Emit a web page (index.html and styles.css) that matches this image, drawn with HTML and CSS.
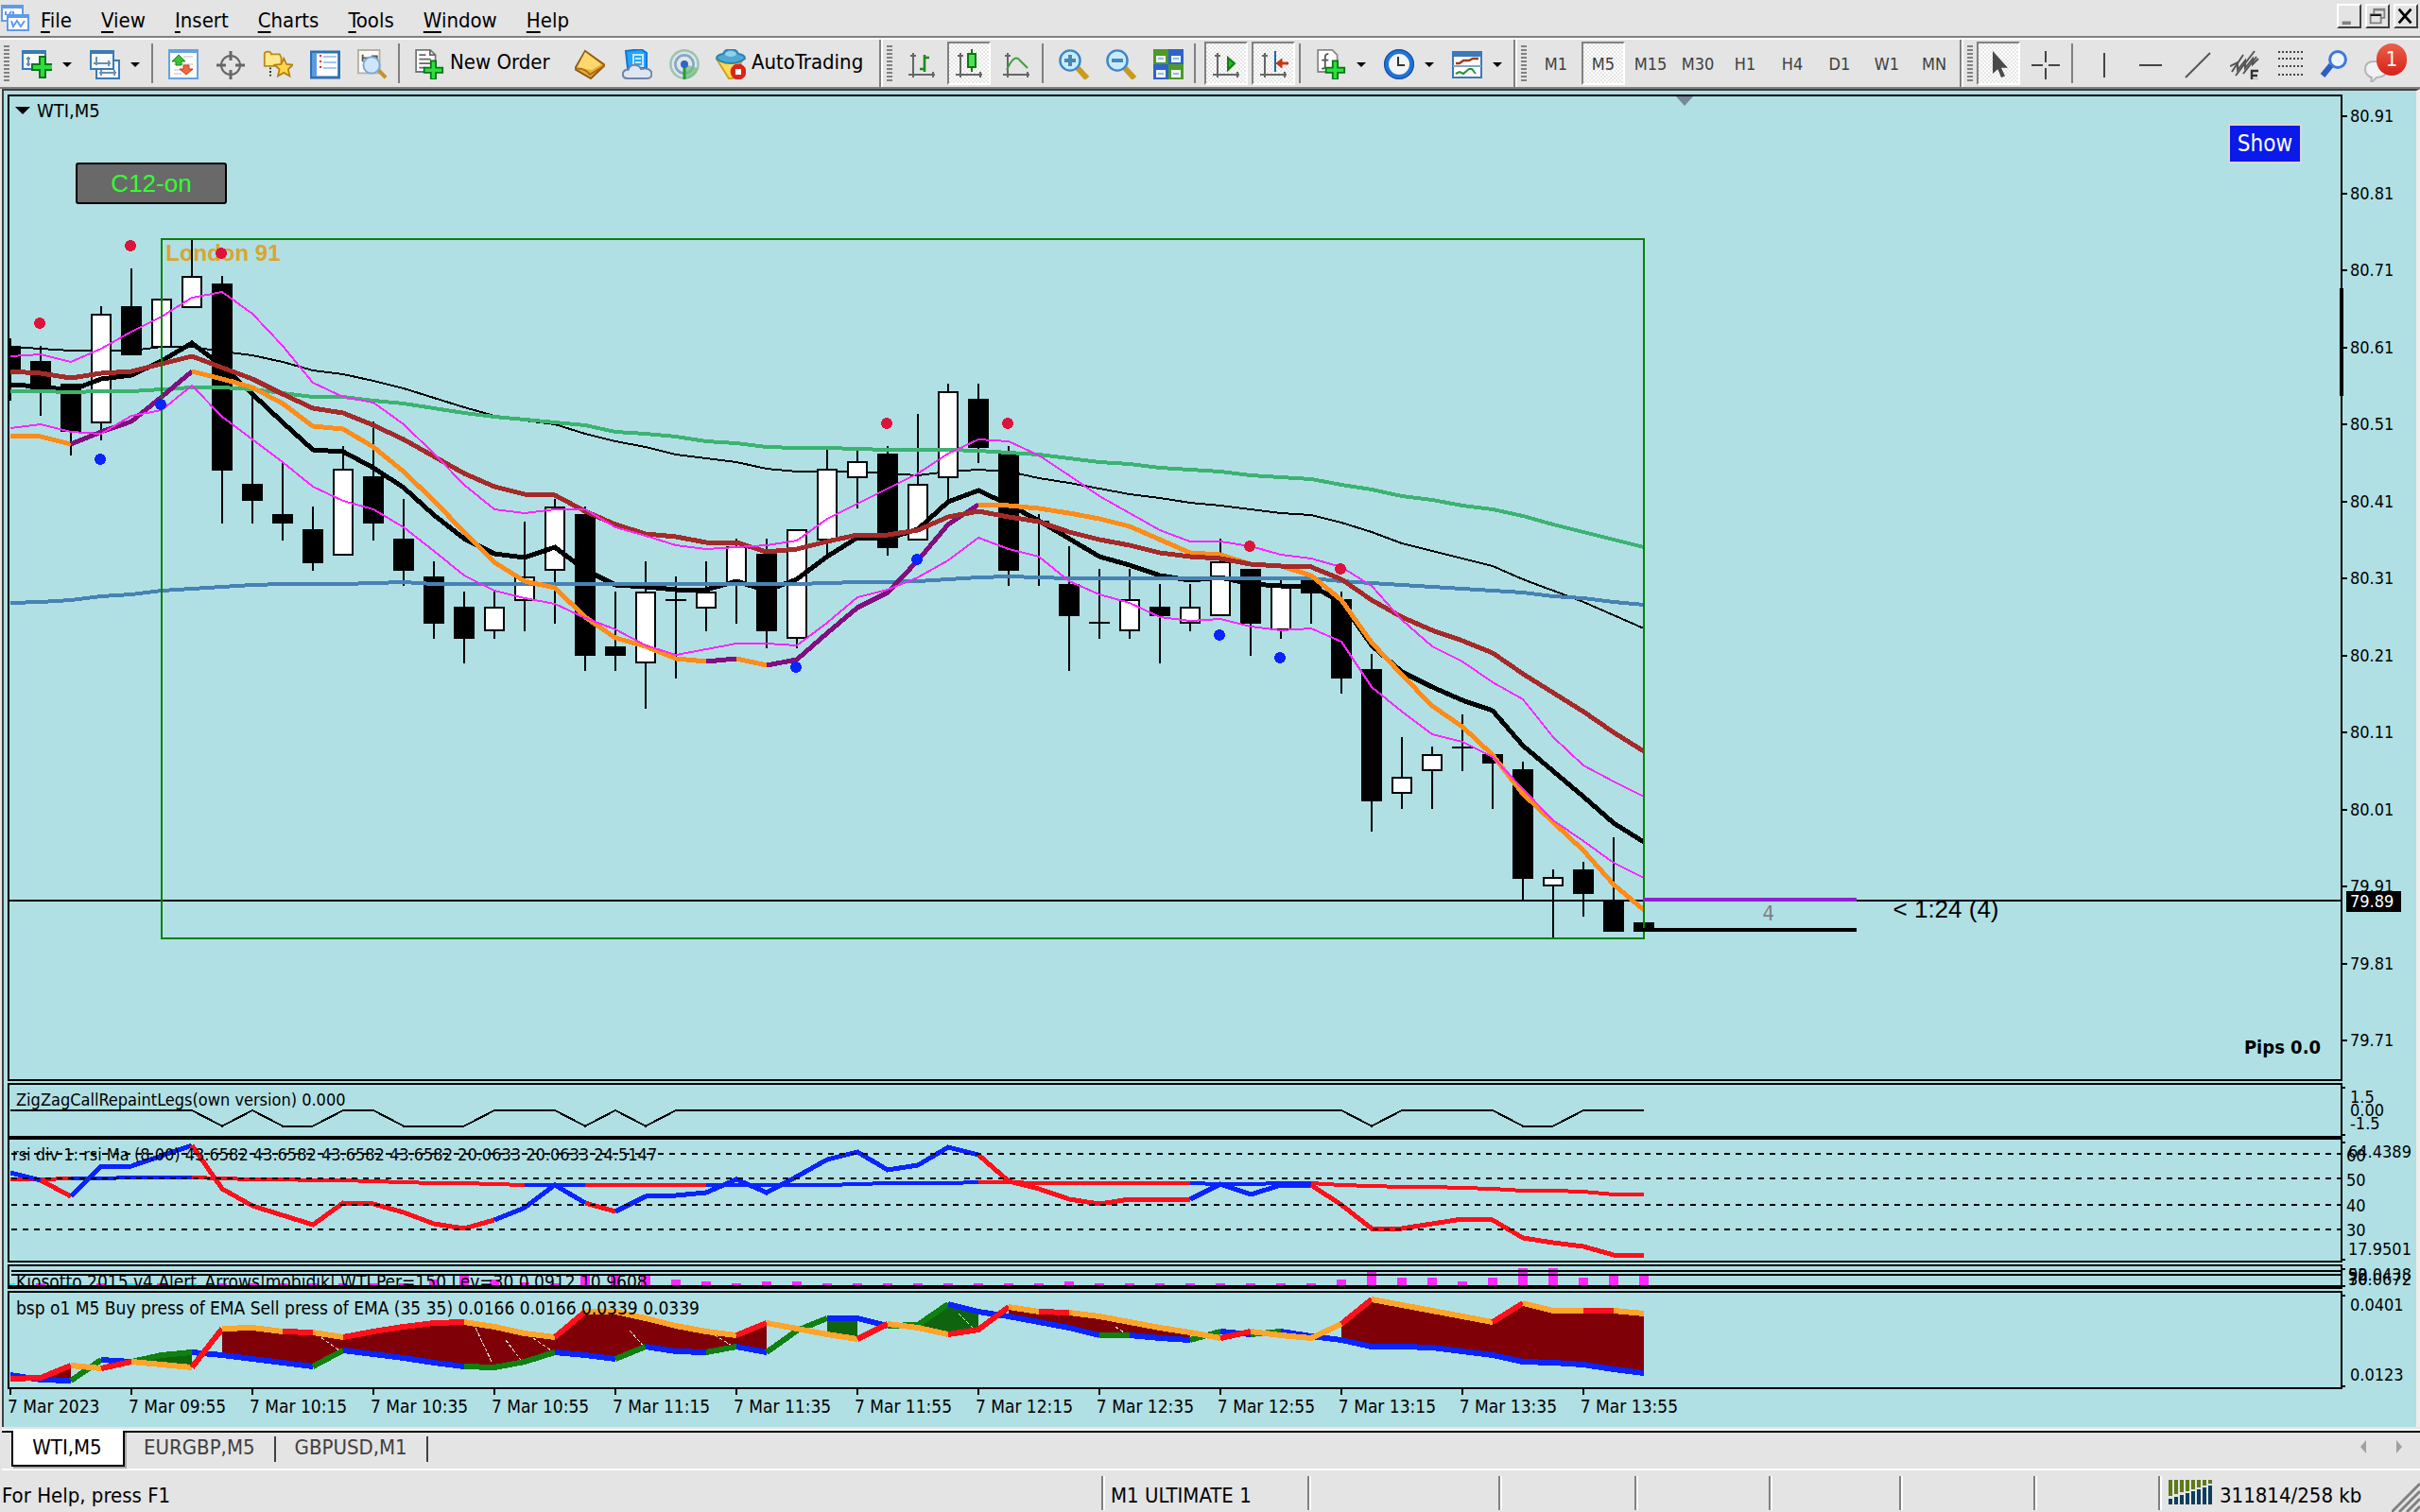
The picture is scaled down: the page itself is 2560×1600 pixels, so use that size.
FILE: index.html
```html
<!DOCTYPE html>
<html lang="en">
<head>
<meta charset="utf-8">
<title>WTI,M5</title>
<link rel="stylesheet" href="styles.css">
</head>
<body>
<header class="menubar">
  <svg class="app-icon" viewBox="0 0 16 16" aria-hidden="true"><path d="M1 2h11v8H1z" fill="#fff" stroke="#5f9bea"/><path d="M1 2.500h11" stroke="#5f9bea" stroke-width="2"/><path d="M3 7V5m1 3l2-3m1 2V5" stroke="#5f9bea" fill="none"/><path d="M4 7h11v8H4z" fill="#fff" stroke="#5f9bea"/><path d="M4 7.500h11" stroke="#5f9bea" stroke-width="2"/><path d="M6 10l1 3 2-3 2 3 2-3" stroke="#5f9bea" fill="none"/></svg>
  <nav class="menus">
    <button><u>F</u>ile</button><button><u>V</u>iew</button><button><u>I</u>nsert</button><button><u>C</u>harts</button><button><u>T</u>ools</button><button><u>W</u>indow</button><button><u>H</u>elp</button>
  </nav>
  <div class="window-buttons">
    <button aria-label="Minimize"><svg viewBox="0 0 12 12"><path d="M2 10h5" stroke="#808080" stroke-width="2"/></svg></button>
    <button aria-label="Restore"><svg viewBox="0 0 12 12"><path d="M4 5V2h6v5H8M4 2.500h6" fill="none" stroke="#808080"/><path d="M2 5h6v5H2z" fill="none" stroke="#808080"/><path d="M2 5.500h6" stroke="#111"/></svg></button>
    <button aria-label="Close"><svg viewBox="0 0 12 12"><path d="M2 2l7 8M9 2l-7 8" stroke="#000" stroke-width="1.500"/></svg></button>
  </div>
</header>

<div class="toolbars">
  <div class="toolbar standard">
    <i class="grip"></i>
    <button class="tool drop" aria-label="New chart"><svg viewBox="0 0 16 16"><path d="M.5 1h12v9.500H.5z" fill="#f4f9fd" stroke="#3a7ab8"/><path d="M0 1.500h13" stroke="#3a7ab8" stroke-width="2"/><path d="M3.500 4v5M2.500 5h2M2.500 8h2" stroke="#6b90b0"/><path d="M9.500 4h3v4h4v3h-4v4h-3v-4h-4V8h4z" fill="#2ddf3c" stroke="#08761a"/></svg></button>
    <button class="tool drop" aria-label="Profiles"><svg viewBox="0 0 16 16"><path d="M3.500 6h12v9.500h-12z" fill="#f4f9fd" stroke="#3a7ab8"/><path d="M5 12.500h9M6 11v3M13 11v3" stroke="#6b90b0"/><path d="M.5 1h12v9.500H.5z" fill="#f4f9fd" stroke="#3a7ab8"/><path d="M0 1.500h13" stroke="#3a7ab8" stroke-width="2"/><path d="M3.500 4v4.500M2 7.500h9M10 6v3" stroke="#6b90b0"/></svg></button>
    <i class="sep"></i>
    <button class="tool" aria-label="Market Watch"><svg viewBox="0 0 16 16"><path d="M.5.5h15v15H.5z" fill="#fff" stroke="#65a3de"/><path d="M.5 1h15" stroke="#65a3de" stroke-width="2"/><path d="M8 4h5M3 8h10M3 11h10M3 13h4" stroke="#ddd"/><path d="M5.500 3L9 6.500H7v2H4v-2H2z" fill="#3fc03c" stroke="#1a8a1a" stroke-width=".5"/><path d="M9.500 13.500L6 10.500h2v-2h3v2h2z" fill="#f0683a" stroke="#c93c12" stroke-width=".5"/></svg></button>
    <button class="tool" aria-label="Data Window"><svg viewBox="0 0 16 16"><circle cx="8" cy="8.500" r="5" fill="none" stroke="#666"/><path d="M8 1v5M8 11v5M.5 8.500h5M10.500 8.500h5" stroke="#666" stroke-width="1.500"/></svg></button>
    <button class="tool" aria-label="Navigator"><svg viewBox="-1 0 18 16"><path d="M0 2q0-1.500 2-1.500T4 2h5l1 2v5H0z" fill="#ffe98a" stroke="#b98a1c"/><path d="M3.500 10v5" stroke="#222" stroke-dasharray="1"/><path d="M11.500 4.500l1.600 3.500 3.800.4-2.800 2.600.9 4-3.500-2-3.500 2 .9-4L6.100 8.400 9.900 8z" fill="#ffd84a" stroke="#b58012"/></svg></button>
    <button class="tool" aria-label="Terminal"><svg viewBox="0 0 16 16"><path d="M.7 1.500h14.600v13.500H.7z" fill="#fff" stroke="#2f6fb5" stroke-width="1.400"/><path d="M1 2h2.500v12.500H1z" fill="#5c9be0"/><path d="M7 4h7M7 7h7M7 10h7" stroke="#a9c6f5"/><path d="M5 3.500h1M5 6.500h1M5 9.500h1" stroke="#e22"/></svg></button>
    <button class="tool" aria-label="Strategy Tester"><svg viewBox="0 0 17 17"><path d="M.5.5h12v13H.5z" fill="#fafafa" stroke="#b5b0a0"/><path d="M3 3v4M3 5h3M8 4h3v4" stroke="#555" fill="none"/><path d="M12 12l4 4" stroke="#c8902a" stroke-width="2.200"/><circle cx="8" cy="9" r="4.600" fill="#cfe6fa" stroke="#78a8d4"/></svg></button>
    <i class="sep"></i>
    <button class="tool labelled order"><svg viewBox="0 0 17 18"><path d="M.7.5h8.500l3 3v10H.7z" fill="#fff" stroke="#777"/><path d="M9 .5v3h3M2.500 3.500h4M2.500 6h7M2.500 8.500h7M2.500 11h4" stroke="#666" fill="none"/><path d="M9.500 7h3v4h4v3h-4v4h-3v-4h-4v-3h4z" fill="#2ddf3c" stroke="#08761a"/></svg><span>New Order</span></button>
    <button class="tool" aria-label="MetaEditor"><svg viewBox="0 0 16 16"><path d="M5.500 1L16 8.500 8.500 15.500 0 10.500z" fill="#e8ae3b" stroke="#8f5b10"/><path d="M5.500 1.500L14 8l-5 3-8-1z" fill="#ffd76b"/><path d="M0 10.500q5-1 8 3l8-5" fill="none" stroke="#a86c14"/></svg></button>
    <button class="tool" aria-label="Virtual hosting"><svg viewBox="0 0 16 16"><path d="M2 1l8-1 3 2v8H3z" fill="#25a5f8" stroke="#0b76d8"/><path d="M6 3h5v6H6zM7 5h3M7 7h3" stroke="#bfe9ff" fill="none"/><path d="M3 15.500q-3 0-2.500-3 .8-2 2.800-1.600 1-3 4-2.400 2 .2 2.700 2 4-1 5.500 1.500.8 3.500-2.500 3.500z" fill="#dfe6f3" stroke="#6f83aa"/></svg></button>
    <button class="tool" aria-label="Signals"><svg viewBox="0 0 16 16"><g fill="none" stroke-width="1.300"><circle cx="8" cy="8" r="7.300" stroke="#9dc4b5"/><circle cx="8" cy="8" r="4.800" stroke="#7fa9c9"/></g><path d="M8 8l7 2q-1 5-7 6z" fill="#6dbf78" opacity=".7"/><path d="M8 9v7" stroke="#2a9b30" stroke-width="1.500"/><circle cx="8" cy="8" r="2" fill="#2c66c4"/></svg></button>
    <button class="tool labelled auto"><svg viewBox="0 0 16 16"><path d="M1 6h13l-5 9.500H7z" fill="#ffdc4d" stroke="#d2a01e"/><path d="M.5 5q0-2 3.500-2.500 1-2.500 4-2.500t4 2.500Q15.500 3 15.500 5q-3 2.500-7.500 2.500T.5 5z" fill="#4fa9d2" stroke="#2e83ad"/><ellipse cx="8" cy="2.500" rx="3" ry="1.500" fill="#8fd3ee"/><circle cx="12" cy="12" r="4.200" fill="#d8261c"/><path d="M10.500 10.500h3v3h-3z" fill="#fff"/></svg><span>AutoTrading</span></button>
  </div>

  <div class="toolbar charts">
    <i class="grip"></i>
    <button class="tool" aria-label="Bar chart"><svg viewBox="0 0 16 16"><path d="M3.500 2v13M1 13.500h14M2 3.500h3M14 12v3" stroke="#666" fill="none"/><path d="M7 10.500h2.500V4.500H12M9.500 3v9" stroke="#1c8a1c" stroke-width="1.300" fill="none"/></svg></button>
    <button class="tool on" aria-label="Candlesticks"><svg viewBox="0 0 16 16"><path d="M3.500 2v13M1 13.500h14M2 3.500h3M14 12v3" stroke="#666" fill="none"/><path d="M9.500 0v12" stroke="#0a7a0a"/><path d="M7.500 2.500h4v7h-4z" fill="#4be05a" stroke="#0a7a0a"/></svg></button>
    <button class="tool" aria-label="Line chart"><svg viewBox="0 0 16 16"><path d="M3.500 2v13M1 13.500h14M2 3.500h3M14 12v3" stroke="#666" fill="none"/><path d="M3 11Q7 2 10 6l4 4" stroke="#3d9f3d" fill="none"/></svg></button>
    <i class="sep"></i>
    <button class="tool" aria-label="Zoom in"><svg viewBox="0 0 16 16"><path d="M10 10l5 5.500" stroke="#c99a22" stroke-width="3"/><circle cx="6" cy="6" r="5.300" fill="#c7ecff" stroke="#3a86c8" stroke-width="1.200"/><path d="M6 3v6M3 6h6" stroke="#4a87b5" stroke-width="2"/></svg></button>
    <button class="tool" aria-label="Zoom out"><svg viewBox="0 0 16 16"><path d="M10 10l5 5.500" stroke="#c99a22" stroke-width="3"/><circle cx="6" cy="6" r="5.300" fill="#c7ecff" stroke="#3a86c8" stroke-width="1.200"/><path d="M3 6h6" stroke="#4a87b5" stroke-width="2"/></svg></button>
    <button class="tool" aria-label="Tile windows"><svg viewBox="0 0 16 16"><path d="M0 0h8v8H0zM8 8h8v8H8z" fill="#4e9a24"/><path d="M8 0h8v8H8zM0 8h8v8H0z" fill="#2f62cf"/><path d="M1.500 3.500h5V7h-5zM9.500 3.500h5V7h-5zM1.500 11h5v4h-5zM9.500 11h5v4h-5z" fill="#eef4ff"/><path d="M2.500 5h3M10.500 5h3M2.500 13h3M10.500 13h3" stroke="#9cb8dd"/></svg></button>
    <i class="sep"></i>
    <button class="tool on" aria-label="Auto scroll"><svg viewBox="0 0 16 16"><path d="M3.500 2v13M1 13.500h14M2 3.500h3M14 12v3" stroke="#666" fill="none"/><path d="M9 4.500l3.500 3L9 11z" fill="#22b822" stroke="#0e7f0e"/></svg></button>
    <button class="tool on" aria-label="Chart shift"><svg viewBox="0 0 16 16"><path d="M3.500 2v13M1 13.500h14M2 3.500h3M14 12v3" stroke="#666" fill="none"/><path d="M9 1v11" stroke="#1d6a9c"/><path d="M9.500 7.500l3-2.500v2H16v1h-3.500v2z" fill="#c43a10" stroke="#c43a10" stroke-width=".5"/></svg></button>
    <i class="sep"></i>
    <button class="tool drop" aria-label="Indicators"><svg viewBox="0 0 17 18"><path d="M.7.5h8.500l3 3v10H.7z" fill="#fff" stroke="#888"/><path d="M7 3q-2-.5-2 2v5q0 2-2 1.500M3 6.500h4" stroke="#555" fill="none"/><path d="M9.500 7h3v4h4v3h-4v4h-3v-4h-4v-3h4z" fill="#2ddf3c" stroke="#08761a"/></svg></button>
    <button class="tool drop" aria-label="Periods"><svg viewBox="0 0 16 16"><circle cx="8" cy="8" r="6.700" fill="#f2f4f7" stroke="#1f74d6" stroke-width="2.400"/><circle cx="8" cy="8" r="7.700" fill="none" stroke="#164f9e" stroke-width=".6"/><path d="M7.500 4v4.500H11" stroke="#333" fill="none"/></svg></button>
    <button class="tool drop" aria-label="Templates"><svg viewBox="0 0 16 16"><path d="M.5 1.500h15v13.500H.5z" fill="#fff" stroke="#3a7ab8"/><path d="M.5 2.500h15" stroke="#3a7ab8" stroke-width="3"/><path d="M.5 9h15" stroke="#7fa6c8"/><path d="M2 7.500h2l2-1.500h3l2-1h3" stroke="#a33a1a" stroke-width="1.200" fill="none"/><path d="M2 13l2-1 2 1 3-2.500h1.500l2 2.500" stroke="#2a8f2a" fill="none"/></svg></button>
  </div>

  <div class="toolbar frames">
    <i class="grip"></i>
    <button class="tool">M1</button><button class="tool on">M5</button><button class="tool">M15</button><button class="tool">M30</button><button class="tool">H1</button><button class="tool">H4</button><button class="tool">D1</button><button class="tool">W1</button><button class="tool">MN</button>
  </div>

  <div class="toolbar objects">
    <i class="grip"></i>
    <button class="tool on" aria-label="Cursor"><svg viewBox="0 0 16 16"><path d="M5 1v12l2.700-2.400L9.500 15l2-.8-2-4.300H13z" fill="#4a4a4a"/></svg></button>
    <button class="tool" aria-label="Crosshair"><svg viewBox="0 0 16 16"><path d="M8 1v6M8 10v6M.5 8.500h6M9.500 8.500h6" stroke="#444"/></svg></button>
    <i class="sep"></i>
    <button class="tool" aria-label="Vertical line"><svg viewBox="0 0 16 16"><path d="M8.500 2v13" stroke="#444"/></svg></button>
    <button class="tool" aria-label="Horizontal line"><svg viewBox="0 0 16 16"><path d="M2 8.500h12" stroke="#444"/></svg></button>
    <button class="tool" aria-label="Trendline"><svg viewBox="0 0 16 16"><path d="M1.500 15l13-13" stroke="#555"/></svg></button>
    <button class="tool" aria-label="Channel"><svg viewBox="0 0 16 16"><path d="M1 12L7 3M3 14L13 1M7 13l7-9M0 9l4-2v4l4-5v4l4-5v3l3-3" stroke="#555" fill="none"/><path d="M15 11.500h-3.500v5H15M11.500 14h3" stroke="#333" stroke-width="1.200" fill="none"/></svg></button>
    <button class="tool fibo" aria-label="Fibonacci"><svg viewBox="0 0 16 16"><path d="M2 1.500h13M2 5h13M2 9h13M2 13.500h13" stroke="#444" stroke-dasharray="1"/></svg></button>
    <button class="tool" aria-label="Search"><svg viewBox="0 0 16 16"><path d="M6.500 8.500L2 14" stroke="#2a5fc0" stroke-width="3"/><circle cx="10" cy="5.500" r="4.200" fill="#eef4ff" stroke="#3f78d8" stroke-width="1.500"/></svg></button>
    <button class="tool chat" aria-label="Notifications"><svg viewBox="0 0 16 16"><path d="M1 9q0-4 5-4t6 4-5 4.500l-3 3 .5-3Q1 12.500 1 9z" fill="#f2f2f4" stroke="#b4b4b8"/></svg><span class="badge">1</span></button>
  </div>
</div>

<main class="chart-window">
  <section class="pane main">
    <div class="plot">
      <span class="session">London 91</span>
      <svg id="price" viewBox="10 102 2466 1040" preserveAspectRatio="none"></svg>
      <span class="title">WTI,M5</span>
      <i class="shift-mark"></i>
      <button class="c12">C12-on</button>
      <button class="show">Show</button>
      <span class="spread">4</span>
      <span class="countdown">&lt; 1:24 (4)</span>
      <span class="pips">Pips 0.0</span>
      <i class="scale-mark"></i>
    </div>
    <div class="axis prices">
      <span>80.91</span><span>80.81</span><span>80.71</span><span>80.61</span><span>80.51</span><span>80.41</span><span>80.31</span><span>80.21</span><span>80.11</span><span>80.01</span><span>79.91</span><span>79.81</span><span>79.71</span>
      <b class="last-price">79.89</b>
    </div>
  </section>
  <section class="pane zigzag">
    <div class="plot"><svg id="zigzag" viewBox="10 1148 2466 52" preserveAspectRatio="none"></svg><span class="caption">ZigZagCallRepaintLegs(own version) 0.000</span></div>
    <div class="axis edge"><span>1.5</span><span>0.00</span><span>-1.5</span></div>
  </section>
  <section class="pane rsi">
    <div class="plot"><svg id="rsi" viewBox="10 1206 2466 128" preserveAspectRatio="none"></svg><span class="caption">rsi div 1: rsi Ma (8.00) 43.6582 43.6582 43.6582 43.6582 20.0633 20.0633 24.5147</span></div>
    <div class="axis edge"><span>60</span><span>50</span><span>40</span><span>30</span><b class="high">64.4389</b><b class="low">17.9501</b></div>
  </section>
  <section class="pane kiosotto">
    <div class="plot"><svg id="kiosotto" viewBox="10 1340 2466 20" preserveAspectRatio="none"></svg><span class="caption">Kiosotto 2015 v4 Alert_Arrows|mobidik| WTI Per=150 Lev=30 0.0912 10.9608</span></div>
    <div class="axis edge"><b>92.0438</b><b>30.0672</b><b>50</b><b>70</b></div>
  </section>
  <section class="pane bsp">
    <div class="plot"><svg id="bsp" viewBox="10 1368 2466 100" preserveAspectRatio="none"></svg><span class="caption">bsp o1 M5 Buy press of EMA Sell press of EMA (35 35) 0.0166 0.0166 0.0339 0.0339</span></div>
    <div class="axis edge"><span>0.0401</span><span>0.0123</span></div>
  </section>
  <div class="times">
    <span>7 Mar 2023</span><span>7 Mar 09:55</span><span>7 Mar 10:15</span><span>7 Mar 10:35</span><span>7 Mar 10:55</span><span>7 Mar 11:15</span><span>7 Mar 11:35</span><span>7 Mar 11:55</span><span>7 Mar 12:15</span><span>7 Mar 12:35</span><span>7 Mar 12:55</span><span>7 Mar 13:15</span><span>7 Mar 13:35</span><span>7 Mar 13:55</span>
  </div>
</main>

<nav class="tabs">
  <button class="tab active">WTI,M5</button><button class="tab">EURGBP,M5</button><button class="tab">GBPUSD,M1</button>
  <div class="tab-scroll"><button aria-label="Previous"><svg viewBox="0 0 8 16"><path d="M7 1v14L1 8z" fill="#a0a0a0"/></svg></button><button aria-label="Next"><svg viewBox="0 0 8 16"><path d="M1 1v14l6-7z" fill="#a0a0a0"/></svg></button></div>
</nav>

<footer class="status">
  <span class="cell help">For Help, press F1</span>
  <span class="cell profile">M1 ULTIMATE 1</span>
  <span class="cell w202"></span><span class="cell w144"></span><span class="cell w142"></span><span class="cell w138"></span><span class="cell w142"></span><span class="cell w132"></span>
  <span class="cell net"><svg viewBox="0 0 46 26"><path d="M2 0v17M8 0v15M14 0v13M20 0v12M26 0v10M32 0v8M38 0v6M44 0v4" stroke="#5f7a18" stroke-width="4"/><path d="M2 20v6M8 18v8M14 16v10M20 14v12M26 12v14M32 10v16M38 8v18M44 6v20" stroke="#0c3d5c" stroke-width="4"/></svg>311814/258 kb</span>
  <svg class="size-grip" viewBox="0 0 30 32"><path d="M0 32L30 2M8 32L30 10M16 32L30 18M24 32l6-6" stroke="#808080" stroke-width="3"/></svg>
</footer>
<script src="chart.js"></script>
</body>
</html>
```
FILE: styles.css
```css
* { box-sizing: border-box; }

:root {
  --face: #e4e4e4;
  --shade: #808080;
  --dark: #404040;
  --chart: #b0e0e4;
}

body {
  margin: 0;
  height: 100vh;
  display: flex;
  flex-direction: column;
  background: var(--face);
  color: #000;
  font: 22px/26px "DejaVu Sans Condensed", "DejaVu Sans", sans-serif;
  overflow: hidden;
}

button {
  margin: 0;
  padding: 0;
  border: 0;
  background: none;
  color: inherit;
  font: inherit;
}

svg { display: block; }

/* menu bar */
.menubar {
  flex: none;
  display: flex;
  align-items: flex-start;
  height: 42px;
  border-bottom: 2px solid #fff;
  box-shadow: inset 0 -2px var(--shade);
}
.app-icon { width: 32px; height: 32px; margin-top: 2px; }
.menus { display: flex; gap: 31px; padding: 9px 0 0 11px; }
.menus u { text-underline-offset: 4px; text-decoration-thickness: 2px; }
.window-buttons { display: flex; gap: 4px; margin: 4px 2px 0 auto; }
.window-buttons button {
  width: 26px;
  height: 26px;
  border: 2px solid;
  border-color: #fff var(--dark) var(--dark) #fff;
}
.window-buttons svg { width: 22px; height: 22px; }

/* toolbars */
.toolbars {
  flex: none;
  display: flex;
  height: 52px;
  border-bottom: 2px solid var(--shade);
}
.toolbar {
  display: flex;
  align-items: center;
  padding-left: 4px;
  border-right: 2px solid var(--shade);
}
.toolbar + .toolbar { border-left: 2px solid #fff; }
.toolbar:last-child { flex: 1; border-right: 0; }
.grip {
  width: 6px;
  height: 38px;
  margin-right: 6px;
  background: repeating-linear-gradient(var(--shade) 0 2px, transparent 2px 4px);
}
.charts .grip, .frames .grip { margin-right: 8px; }
.objects .grip { margin-right: 4px; }
.sep { width: 2px; height: 42px; margin-right: 9px; background: var(--shade); }
.tool {
  position: relative;
  display: flex;
  align-items: center;
  justify-content: center;
  width: 46px;
  height: 46px;
  margin-right: 4px;
  padding-top: 2px;
  border: 2px solid transparent;
}
.tool svg { flex: none; width: 32px; height: 32px; }
.tool.on {
  border-color: var(--shade) #fff #fff var(--shade);
  background: repeating-conic-gradient(#fff 0 25%, #e6e6e6 0 50%) 0 0 / 4px 4px;
}
.tool.drop { width: 68px; padding-right: 22px; }
.tool.drop::after {
  content: "";
  position: absolute;
  right: 6px;
  top: 20px;
  border: 5px solid transparent;
  border-top-color: #000;
  border-bottom: 0;
}
.tool.labelled { justify-content: flex-start; gap: 6px; padding-left: 4px; white-space: nowrap; }
.labelled span { padding-bottom: 4px; }
.tool.order { width: 165px; }
.tool.auto { width: 175px; }
.frames .tool, .axis { font-size: 18px; }
.frames .tool { color: #404040; }
.tool.fibo { width: 40px; }
.tool.chat { justify-content: flex-start; padding: 8px 0 0 2px; }
.badge {
  position: absolute;
  left: 16px;
  top: 0;
  width: 32px;
  height: 34px;
  border-radius: 16px;
  background: linear-gradient(#ea6048, #d8201a);
  color: #fff;
  font-size: 22px;
  line-height: 34px;
  text-align: center;
}

/* chart window */
.chart-window {
  flex: 1;
  min-height: 0;
  display: flex;
  flex-direction: column;
  gap: 2px;
  padding: 4px 0 0 4px;
  border: solid var(--dark);
  border-width: 2px 0 0 2px;
  border-right: 4px solid #f0ecec;
  margin-left: 2px;
  background: var(--chart);
  font-size: 20px;
  line-height: 20px;
}
.pane { display: grid; grid-template-columns: 1fr 78px; min-height: 0; }
.main { flex: 1044; }
.zigzag { flex: 56; }
.rsi { flex: 132; }
.kiosotto { flex: 26; }
.bsp { flex: 104; }
.plot { position: relative; border: 2px solid #000; min-height: 0; overflow: hidden; }
.kiosotto .plot { border-bottom-width: 4px; }
.main .plot { overflow: visible; }
.plot > svg { position: absolute; inset: 0; width: 100%; height: 100%; shape-rendering: crispEdges; }
.plot > svg path, .plot > svg polyline { fill: none; stroke: #000; stroke-width: 2; }

.caption { position: absolute; left: 7px; top: 6px; white-space: nowrap; font-size: 18px; }
.rsi .caption { left: 3px; }
.kiosotto .caption, .bsp .caption, .times { font-size: 19px; }
.title { position: absolute; left: 6px; top: 5px; display: flex; align-items: center; gap: 7px; }
.title::before {
  content: "";
  border: 8px solid transparent;
  border-top-color: #000;
  border-bottom: 0;
}
.session {
  position: absolute;
  left: 6.700%;
  top: 14.600%;
  color: #daa530;
  font: bold 24px/28px "Liberation Sans", sans-serif;
}
.c12, .show { position: absolute; }
.c12 {
  left: 70px;
  top: 70px;
  width: 160px;
  height: 44px;
  border: 2px solid #000;
  border-radius: 3px;
  background: #696969;
  color: #32ff32;
  font: 26px/30px "Liberation Sans", sans-serif;
}
.show {
  right: 41px;
  top: 29px;
  width: 78px;
  height: 42px;
  border: 2px solid #d8d8d8;
  background: #0a1aea;
  color: #fff;
  font: 24px/30px "DejaVu Sans Condensed", sans-serif;
}
.shift-mark {
  position: absolute;
  left: 71.500%;
  top: 0;
  border: 9px solid transparent;
  border-top: 10px solid #778899;
  border-bottom: 0;
}
.spread { position: absolute; left: 75.200%; top: 82.200%; color: #808080; font-size: 22px; }
.countdown { position: absolute; left: 80.800%; top: 81.300%; font: 26px/28px "Liberation Sans", sans-serif; }
.pips { position: absolute; right: 21px; bottom: 24px; font-weight: bold; }
.scale-mark { position: absolute; right: -3px; top: 19.500%; width: 4px; height: 11%; background: #000; }

.axis { position: relative; display: flex; flex-direction: column; justify-content: space-between; padding-left: 8px; }
.axis span { position: relative; }
.prices { padding-top: 13px; padding-bottom: 33px; }
.prices span::before {
  content: "";
  position: absolute;
  left: -8px;
  top: 9px;
  width: 5px;
  height: 2px;
  background: #000;
}
.last-price {
  position: absolute;
  left: 4px;
  top: 80.700%;
  width: 58px;
  height: 22px;
  padding-left: 4px;
  background: #000;
  color: #fff;
  font-weight: normal;
  line-height: 22px;
}
.edge::before, .edge::after {
  content: "";
  position: absolute;
  left: 0;
  width: 3px;
  height: 2px;
  background: #000;
}
.edge::before { top: 4px; }
.edge::after { bottom: 2px; }
.zigzag .axis { padding-top: 8px; padding-bottom: 8px; line-height: 14px; }
.rsi .axis { padding: 9px 0 24px 4px; }
.rsi b { position: absolute; left: 6px; font-weight: normal; }
.high { top: 5px; }
.low { bottom: 4px; }
.kiosotto .axis { overflow: hidden; }
.kiosotto b { position: absolute; left: 6px; top: 1px; font-weight: normal; }
.kiosotto b:nth-child(even) { top: 6px; }
.bsp .axis { padding-top: 5px; padding-bottom: 5px; }

.times { flex: none; display: flex; height: 38px; margin: 0 78px 0 0; }
.times span { position: relative; flex: 0 0 5.182%; padding-top: 6px; white-space: nowrap; }
.times span::before {
  content: "";
  position: absolute;
  left: 2px;
  top: -2px;
  width: 2px;
  height: 6px;
  background: #000;
}

/* chart tabs */
.tabs {
  flex: none;
  display: flex;
  align-items: flex-start;
  height: 46px;
  margin-left: 2px;
  padding: 4px 0 0 10px;
  border-bottom: 2px solid #fff;
  background: linear-gradient(var(--face) 0 2px, #fff 2px 4px, #000 4px 6px, transparent 6px);
}
.tab {
  position: relative;
  height: 36px;
  padding: 0 22px 0 20px;
  color: #404040;
  white-space: nowrap;
}
.tab + .tab::after {
  content: "";
  position: absolute;
  right: 0;
  top: 6px;
  width: 2px;
  height: 27px;
  background: var(--dark);
}
.tab.active {
  width: 120px;
  height: 38px;
  padding: 0 2px 0 0;
  border: 2px solid #000;
  border-top: 0;
  background: #fff;
  color: #000;
  box-shadow: 2px 2px #a8a8a8;
}
.tab-scroll { display: flex; gap: 30px; margin: 9px 18px 0 auto; }
.tab-scroll svg { width: 8px; height: 16px; }

/* status bar */
.status { flex: none; position: relative; display: flex; height: 44px; padding: 6px 0 2px; }
.cell { display: flex; align-items: center; white-space: nowrap; padding-top: 5px; }
.cell + .cell { border-left: 2px solid var(--shade); box-shadow: inset 2px 0 #fff; }
.help { flex: 1; padding-left: 2px; }
.profile { width: 218px; padding-left: 8px; }
.w202 { width: 202px; }
.w144 { width: 144px; }
.w142 { width: 142px; }
.w138 { width: 138px; }
.w132 { width: 132px; }
.net { width: 277px; gap: 8px; padding-left: 9px; }
.net svg { width: 46px; height: 26px; margin-bottom: 8px; }
.size-grip { position: absolute; right: 0; bottom: 0; width: 30px; height: 32px; }
```
FILE: chart.js
```js
const NS = 'http://www.w3.org/2000/svg';
const STEP = 32;
const x = i => 11 + STEP * i;

function add(svg, tag, attrs, css) {
  const el = document.createElementNS(NS, tag);
  for (const k in attrs) el.setAttribute(k, attrs[k]);
  if (css) Object.assign(el.style, css);
  svg.appendChild(el);
}
function line(svg, ys, color, width, from = 0) {
  add(svg, 'polyline', { points: ys.map((y, i) => x(from + i) + ',' + y).join(' ') },
    { stroke: color, strokeWidth: width });
}
// runs: [last index, color] for consecutive stretches of one series
function runs(svg, ys, list, width) {
  let start = 0;
  for (const [end, color] of list) {
    line(svg, ys.slice(start, end + 1), color, width, start);
    start = end;
  }
}

/* price pane: [kind, body top, body bottom, high, low] */
const bars = [
  'b',366,393,358,424, 'b',382,412,366,440, 'b',406,457,406,482, 'w',332,448,324,466,
  'b',324,376,284,376, 'w',316,368,316,368, 'w',292,326,253,326, 'b',300,498,292,554,
  'b',512,530,415,554, 'b',544,554,490,572, 'b',560,596,536,604, 'w',496,588,472,588,
  'b',504,554,446,572, 'b',570,604,528,620, 'b',610,660,594,676, 'b',642,676,626,702,
  'w',642,668,626,676, 'w',610,636,552,668, 'w',536,604,528,660, 'b',544,694,536,710,
  'b',684,694,626,710, 'w',626,702,594,750, 'b',634,636,610,718, 'w',626,644,594,668,
  'w',578,618,570,660, 'b',586,668,570,686, 'w',560,676,560,686, 'w',496,572,476,590,
  'w',488,506,474,538, 'b',480,580,472,588, 'w',512,572,438,572, 'w',414,506,406,530,
  'b',422,474,406,490, 'b',480,604,472,620, 'b',551,553,544,620, 'b',618,652,578,710,
  'b',658,660,602,676, 'w',634,668,602,676, 'b',642,652,618,702, 'w',642,660,618,668,
  'w',594,652,570,652, 'b',602,660,602,694, 'w',620,667,613,676, 'b',612,628,612,660,
  'b',634,718,626,734, 'b',708,848,692,880, 'w',822,840,780,856, 'w',798,816,790,856,
  'b',790,792,756,816, 'b',798,808,798,856, 'b',814,930,806,952, 'w',928,938,920,992,
  'b',920,946,912,970, 'b',953,986,886,986, 'b',976,986,976,986
];
const price = document.getElementById('price');
const slowest = [638,637,635,631,629,625,623,621,619,618,618,618,617,616,618,618,618,618,618,618,618,618,618,618,618,618,618,617,616,616,615,613,611,610,611,612,612,612,612,612,612,612,612,612,615,617,619,621,623,625,627,631,633,637,640];
const green = [414,414,415,414,414,412,410,410,412,416,420,420,424,427,432,437,441,444,447,450,457,459,462,467,469,473,474,474,475,476,476,476,477,479,481,485,489,491,495,497,499,503,505,507,513,518,525,529,535,539,546,555,563,571,579];
const thin = [367,369,371,371,371,367,367,372,376,383,392,396,403,411,421,431,440,445,449,459,467,473,481,485,489,496,499,499,499,501,503,499,497,499,506,511,517,523,527,532,535,539,543,545,553,563,575,583,591,599,613,625,637,651,665];
const thick = [407,409,413,401,397,382,363,387,417,447,476,478,495,516,545,570,586,590,579,603,619,621,624,624,615,625,613,589,569,570,560,531,519,534,551,570,589,598,609,614,611,618,620,620,637,683,711,727,741,752,789,816,843,871,891];
const brown = [393,395,400,395,393,385,377,389,401,417,432,437,450,465,483,501,515,523,524,541,555,565,568,574,574,584,581,573,566,566,561,547,541,547,552,563,571,577,585,589,591,597,599,600,613,635,653,667,678,691,713,733,753,775,795];
const trend = [461,462,470,457,446,420,393,401,410,427,451,454,473,499,530,563,595,615,622,653,675,684,697,700,697,704,698,670,643,627,593,555,534,535,538,543,549,557,571,585,587,597,599,609,635,680,714,747,769,799,840,870,900,936,963];
const upper = [377,375,383,369,351,335,315,309,332,366,405,420,426,449,480,513,539,543,539,539,558,567,577,581,579,577,572,549,533,517,501,480,465,467,482,503,525,543,561,573,573,578,587,591,600,620,656,684,700,722,740,780,810,827,843];
const lower = [453,449,457,459,440,434,408,441,465,489,515,530,539,558,583,609,625,633,639,654,666,683,693,687,681,681,683,659,632,624,611,593,569,581,589,615,629,638,653,657,655,663,667,665,679,727,753,777,785,801,835,868,890,913,929];

add(price, 'path', { d: 'M10 953H2476' });
line(price, thin, '#000', 2);
for (let i = 0; i < bars.length / 5; i++) {
  const [kind, top, bottom, high, low] = bars.slice(i * 5, i * 5 + 5);
  add(price, 'rect', { x: x(i) - 1, y: high, width: 2, height: low - high });
  add(price, 'rect', { x: x(i) - 11, y: top, width: 22, height: bottom - top });
  if (kind === 'w') add(price, 'rect', { x: x(i) - 9, y: top + 2, width: 18, height: bottom - top - 4, fill: '#fff' });
}
line(price, thick, '#000', 5);
line(price, green, '#3cb371', 4);
line(price, slowest, '#4682b4', 4);
runs(price, trend, [[2,'#ff8c1a'],[6,'#800f80'],[23,'#ff8c1a'],[24,'#800f80'],[25,'#ff8c1a'],[32,'#800f80'],[54,'#ff8c1a']], 5);
line(price, brown, '#a52a2a', 5);
line(price, upper, '#ff26ff', 2);
line(price, lower, '#ff26ff', 2);
add(price, 'path', { d: 'M171 253H1739V993H171Z' }, { stroke: '#0a800a' });
add(price, 'path', { d: 'M1738 952H1964' }, { stroke: '#9020d0', strokeWidth: 4 });
add(price, 'path', { d: 'M1738 984H1964' }, { strokeWidth: 4 });
for (const [cx, cy] of [[42,342],[138,260],[234,268],[938,448],[1066,448],[1322,578],[1418,602]])
  add(price, 'circle', { cx, cy, r: 6, fill: '#dc143c' });
for (const [cx, cy] of [[106,486],[170,428],[842,706],[970,592],[1290,672],[1354,696]])
  add(price, 'circle', { cx, cy, r: 6, fill: '#0a24ff' });

/* zigzag pane */
const legs = '0000000' + '1011001110001010' + '0'.repeat(22) + '1000011000';
line(document.getElementById('zigzag'), [...legs].map(v => +v ? 1190 : 1174), '#000', 2);

/* rsi pane */
const rsi = document.getElementById('rsi');
const R = '#ff101c', B = '#0a24ff', O = '#ffa52a', G = '#108010';
const fast = [1241,1249,1266,1234,1234,1223,1212,1258,1276,1286,1296,1273,1274,1283,1295,1300,1291,1278,1254,1273,1282,1266,1265,1262,1248,1262,1245,1227,1219,1238,1233,1214,1222,1250,1258,1269,1274,1269,1269,1269,1253,1264,1254,1254,1275,1300,1300,1295,1290,1291,1310,1315,1319,1328,1328];
const slow = [1248,1248,1247,1247,1246,1246,1246,1247,1248,1248,1249,1249,1250,1251,1252,1252,1253,1254,1254,1254,1254,1254,1254,1254,1254,1254,1254,1254,1253,1252,1252,1252,1251,1251,1252,1252,1252,1252,1252,1252,1253,1253,1252,1252,1254,1255,1256,1256,1257,1258,1260,1260,1261,1264,1264];
runs(rsi, slow, [[2,R],[6,B],[17,R],[19,B],[23,R],[32,B],[39,R],[43,B],[54,R]], 4);
runs(rsi, fast, [[1,B],[2,R],[6,B],[16,R],[19,B],[20,R],[32,B],[39,R],[43,B],[54,R]], 5);
for (const y of [1221, 1247, 1275, 1301])
  add(rsi, 'path', { d: `M12 ${y}H2476`, 'stroke-dasharray': '6 6' });

/* kiosotto pane */
const kio = document.getElementById('kiosotto');
const heights = [2,2,2,2,2,2,2,2,2,2,2,2,2,2,6,10,6,3,2,10,10,10,6,4,2,4,4,2,2,2,2,2,2,2,2,4,2,2,2,2,2,2,2,2,6,14,8,8,4,8,18,18,8,10,10];
heights.forEach((h, i) => add(kio, 'rect', { x: x(i) - 5, y: 1360 - h, width: 10, height: h, fill: i < 7 && i % 2 === 0 ? '#20f0f0' : '#ff26ff' }));
add(kio, 'path', { d: 'M12 1345H2476M12 1349H2476' });

/* buy / sell pressure pane */
const bsp = document.getElementById('bsp');
const sell = [1459,1458,1445,1448,1441,1444,1447,1406,1405,1409,1410,1415,1409,1404,1400,1399,1404,1411,1415,1388,1388,1395,1403,1409,1413,1400,1406,1412,1417,1401,1405,1412,1407,1383,1388,1389,1393,1399,1405,1410,1416,1409,1413,1416,1401,1375,1381,1387,1393,1399,1379,1387,1387,1387,1390];
const buy = [1455,1460,1461,1439,1441,1434,1431,1434,1438,1442,1446,1429,1433,1437,1442,1446,1447,1441,1431,1434,1438,1425,1430,1431,1425,1431,1408,1395,1395,1403,1402,1380,1388,1393,1399,1405,1413,1413,1416,1418,1409,1412,1409,1414,1418,1425,1425,1426,1430,1434,1441,1442,1444,1449,1453];
function fill(from, to, color) {
  const p = [];
  for (let i = from; i <= to; i++) p.push(x(i) + ',' + sell[i]);
  for (let i = to; i >= from; i--) p.push(x(i) + ',' + buy[i]);
  add(bsp, 'polygon', { points: p.join(' '), fill: color });
}
fill(1, 2, '#800008'); fill(7, 25, '#800008'); fill(33, 39, '#800008'); fill(44, 54, '#800008');
fill(4, 6, '#0f640f'); fill(27, 28, '#0f640f'); fill(30, 32, '#0f640f');
add(bsp, 'path', { d: 'M335 1412l24 17M503 1405l18 38M535 1418l18 24M564 1416l22 15M666 1408l16 18M756 1413l20 12M1014 1390l18 18M1180 1404l12 8' }, { stroke: '#e8f4f4', strokeWidth: 1, strokeDasharray: '4 2' });
runs(bsp, buy, [[2,B],[3,G],[4,B],[6,G],[10,B],[11,G],[15,B],[18,G],[20,B],[21,G],[23,B],[24,G],[25,B],[27,G],[29,B],[31,G],[36,B],[37,G],[39,B],[40,G],[41,B],[42,G],[54,B]], 6);
runs(bsp, sell, [[2,R],[3,O],[4,R],[6,O],[7,R],[9,O],[10,R],[11,O],[15,R],[18,O],[19,R],[24,O],[25,R],[28,O],[29,R],[31,O],[33,R],[34,O],[35,R],[40,O],[41,R],[44,O],[45,R],[49,O],[50,R],[52,O],[53,R],[54,O]], 6);
```
